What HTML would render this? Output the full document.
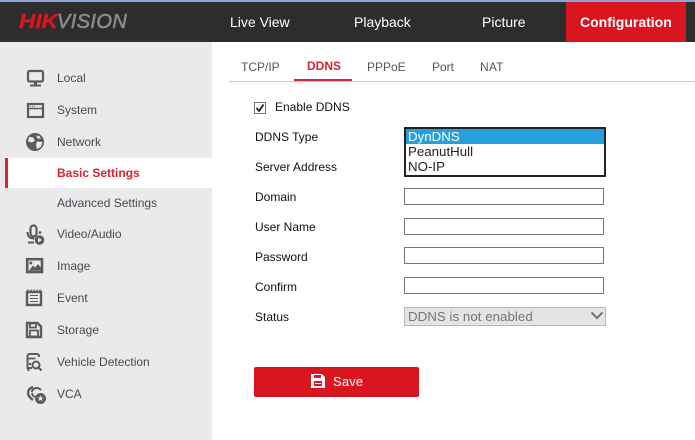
<!DOCTYPE html>
<html><head><meta charset="utf-8">
<style>
html,body{margin:0;padding:0}
body{width:695px;height:440px;position:relative;overflow:hidden;background:#fff;font-family:"Liberation Sans",sans-serif;font-size:12px;color:#000}
.a{position:absolute;white-space:nowrap}
.nav{color:#fff;font-size:14px;line-height:16px;top:14px}
.side{left:57px;color:#444a55;line-height:14px}
.tab{top:60px;color:#555;line-height:14px}
.lb{left:255px;line-height:14px;color:#111}
.inp{position:absolute;left:404px;width:198px;height:15px;border:1px solid #767676;background:#fff}
svg{position:absolute;overflow:visible}
</style></head><body>
<div class="a" style="left:0;top:0;width:695px;height:2px;background:#8ea4d8"></div>
<div class="a" style="left:0;top:2px;width:695px;height:40px;background:#2d2d2d"></div>
<div class="a" style="left:566px;top:2px;width:120px;height:40px;background:#d9161f"></div>
<div class="a" style="left:19px;top:10px;font-size:20px;line-height:24px;font-weight:bold;font-style:italic;color:#d9161f;-webkit-text-stroke:.4px #d9161f;transform:scaleX(1.13);transform-origin:left top">HIK</div>
<div class="a" style="left:57px;top:10px;font-size:20px;line-height:24px;font-style:italic;letter-spacing:.4px;color:#8a8a8a;-webkit-text-stroke:.6px #8a8a8a">VISION</div>
<div class="a nav" style="left:230px">Live View</div>
<div class="a nav" style="left:354px">Playback</div>
<div class="a nav" style="left:482px">Picture</div>
<div class="a nav" style="left:580px;font-weight:bold">Configuration</div>

<div class="a" style="left:0;top:42px;width:212px;height:398px;background:#eaeaea"></div>
<div class="a" style="left:5px;top:158px;width:207px;height:30px;background:#fff"></div>
<div class="a" style="left:5px;top:158px;width:3px;height:30px;background:#d32a35"></div>

<div class="a side" style="top:71px">Local</div>
<div class="a side" style="top:103px">System</div>
<div class="a side" style="top:135px">Network</div>
<div class="a side" style="top:166px;color:#d9222c;font-weight:bold">Basic Settings</div>
<div class="a side" style="top:196px">Advanced Settings</div>
<div class="a side" style="top:227px">Video/Audio</div>
<div class="a side" style="top:259px">Image</div>
<div class="a side" style="top:291px">Event</div>
<div class="a side" style="top:323px">Storage</div>
<div class="a side" style="top:355px">Vehicle Detection</div>
<div class="a side" style="top:387px">VCA</div>

<svg style="left:0;top:0" width="60" height="420" fill="none" stroke="#5c5c5c" stroke-width="2.200">
<!-- Local -->
<rect x="28" y="71" width="15" height="10.500" rx="1.500"/>
<path d="M35.500 82v3" stroke-width="3"/><path d="M30 85.500h11" stroke-width="2"/>
<!-- System -->
<rect x="28" y="104" width="15" height="13"/>
<path d="M28 108.500h15" stroke-width="1.500"/>
<path d="M30 106.300h5" stroke-width="1" stroke-dasharray="1 1"/>
<!-- Network -->
<circle cx="35" cy="142" r="9" fill="#5c5c5c" stroke="none"/>
<path d="M29 137l4 .5 2 3-3 2-4-1zM37 141.500l5.500.5-1.500 5-4 2-1-4.500zM36.500 135.500l3 .5 1.500 2.500-3.500 0z" fill="#eaeaea" stroke="none"/>
<!-- Video -->
<rect x="30.500" y="225.500" width="6" height="11" rx="3"/>
<path d="M27.500 232c0 5 3 6.500 7 6.500M28 242.500h6" stroke-width="2"/>
<circle cx="40" cy="232.500" r="1.400" fill="#5c5c5c" stroke="none"/>
<circle cx="39.500" cy="240" r="4.800" fill="#5c5c5c" stroke="none"/>
<path d="M38 237.500l4 2.500-4 2.500z" fill="#eaeaea" stroke="none"/>
<!-- Image -->
<rect x="27.200" y="259.200" width="14.800" height="12.800" stroke-width="2.600"/>
<circle cx="30.800" cy="263" r="1.500" fill="#5c5c5c" stroke="none"/>
<path d="M29 270.500l4-5 2 2 3-3.500 3 4v2.500z" fill="#5c5c5c" stroke="none"/>
<!-- Event -->
<rect x="27" y="292" width="14" height="13" stroke-width="2.400"/>
<path d="M28 289.500v2M31 289.500v2M34 289.500v2M37 289.500v2M40 289.500v2" stroke-width="1.400"/>
<path d="M30 295.500h8M30 298.500h8M30 301.500h8" stroke-width="1.100"/>
<!-- Storage -->
<path d="M27 323h10.500l3.500 3.500v10.500h-14z" stroke-width="2.400"/>
<path d="M30 323v4.500h6v-4.500" stroke-width="1.800"/>
<rect x="30" y="330.500" width="8" height="6" stroke-width="1.800"/>
<!-- Vehicle -->
<path d="M32 368h-4.500v-12c0-1 1-2 2-2h7.500c1 0 2 1 2 2v1" stroke-width="2"/>
<path d="M27.500 358.500h8M27 370h2.500" stroke-width="1.800"/>
<circle cx="36" cy="365" r="3.500" stroke-width="2"/>
<path d="M38.500 367.500l3 3" stroke-width="2.200"/>
<circle cx="30" cy="364" r="1.200" fill="#5c5c5c" stroke="none"/>
<!-- VCA -->
<path d="M33 387c-3 1-5 3-5 6 0 3 2 5 5 7" stroke-width="2.400"/>
<path d="M32 392c0-3 3-4 5-4 2 0 3 1 4 2M35 397c-2-1-3-2-3-4" stroke-width="2"/>
<circle cx="40.500" cy="398.500" r="5.500" fill="#5c5c5c" stroke="none"/>
<path d="M40.500 395.500l.9 2h2l-1.600 1.400.6 2.100-1.900-1.100-1.900 1.100.6-2.100-1.600-1.400h2z" fill="#eaeaea" stroke="none"/>
</svg>

<div class="a" style="left:229px;top:81px;width:466px;height:1px;background:#c8c8c8"></div>
<div class="a tab" style="left:241px">TCP/IP</div>
<div class="a tab" style="left:307px;top:59px;color:#d9222c;font-weight:bold">DDNS</div>
<div class="a" style="left:294px;top:79px;width:58px;height:2px;background:#d32a35"></div>
<div class="a tab" style="left:367px">PPPoE</div>
<div class="a tab" style="left:432px">Port</div>
<div class="a tab" style="left:480px;letter-spacing:.2px">NAT</div>

<div class="a" style="left:254px;top:102px;width:10px;height:10px;border:1px solid #767676;background:#fff"></div>
<svg style="left:254px;top:102px" width="12" height="12" fill="none" stroke="#222" stroke-width="1.800"><path d="M2.500 6l2.500 3 4.500-6.500"/></svg>
<div class="a lb" style="top:100px;left:275px">Enable DDNS</div>
<div class="a lb" style="top:130px">DDNS Type</div>
<div class="a lb" style="top:160px">Server Address</div>
<div class="a lb" style="top:190px">Domain</div>
<div class="a lb" style="top:220px">User Name</div>
<div class="a lb" style="top:250px">Password</div>
<div class="a lb" style="top:280px">Confirm</div>
<div class="a lb" style="top:310px">Status</div>

<div class="inp" style="top:188px"></div>
<div class="inp" style="top:218px"></div>
<div class="inp" style="top:247px"></div>
<div class="inp" style="top:277px"></div>

<div class="a" style="left:404px;top:127px;width:198px;height:46px;border:2px solid #222;background:#fff;font-size:13.300px;line-height:15px;color:#222">
<div style="background:#269fdb;color:#fff;padding-left:2px;height:15px">DynDNS</div>
<div style="padding-left:2px;height:15px">PeanutHull</div>
<div style="padding-left:2px;height:16px;line-height:16px">NO-IP</div>
</div>

<div class="a" style="left:404px;top:307px;width:200px;height:17px;border:1px solid #b8b8b8;background:#e4e4e4;font-size:13.300px;line-height:17px;color:#757575;text-indent:3px;letter-spacing:.03px">DDNS is not enabled</div>
<svg style="left:590px;top:311px" width="14" height="10" fill="none" stroke="#666" stroke-width="1.800"><path d="M1.500 1.500l5.500 5.500 5.500-5.500"/></svg>

<div class="a" style="left:254px;top:367px;width:165px;height:30px;background:#d9161f;border-radius:2px"></div>
<svg style="left:311px;top:374px" width="15" height="15"><path d="M0 0h11l3 3v11h-14z" fill="#fff"/><path d="M3 1h7v3h-7zM3 7h8v5h-8z" fill="#d9161f"/><path d="M4 9.500h6" stroke="#fff" stroke-width="1"/></svg>
<div class="a" style="left:333px;top:374px;color:#fff;font-size:13px;line-height:16px;letter-spacing:.15px">Save</div>
</body></html>
